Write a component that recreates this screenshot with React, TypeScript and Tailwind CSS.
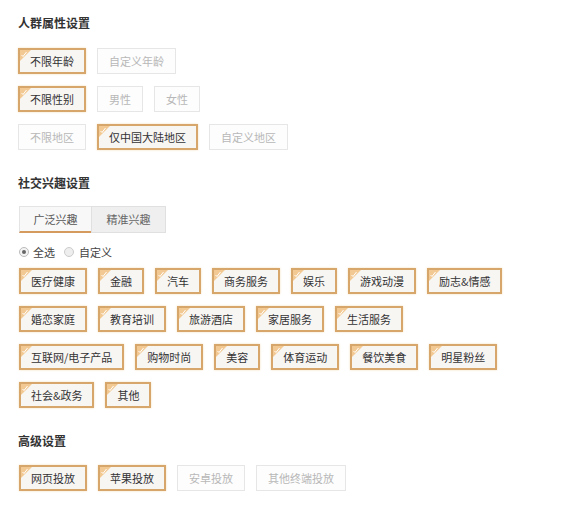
import React from 'react';

type Opt = { label: string; on?: boolean };

const font = { fontFamily: '"Noto Sans CJK SC", "Noto Sans", sans-serif' };

const crowdRows: Opt[][] = [
  [{ label: '不限年龄', on: true }, { label: '自定义年龄' }],
  [{ label: '不限性别', on: true }, { label: '男性' }, { label: '女性' }],
  [{ label: '不限地区' }, { label: '仅中国大陆地区', on: true }, { label: '自定义地区' }],
];

const interestRows: string[][] = [
  ['医疗健康', '金融', '汽车', '商务服务', '娱乐', '游戏动漫', '励志&情感'],
  ['婚恋家庭', '教育培训', '旅游酒店', '家居服务', '生活服务'],
  ['互联网/电子产品', '购物时尚', '美容', '体育运动', '餐饮美食', '明星粉丝'],
  ['社会&政务', '其他'],
];

const advanced: Opt[] = [
  { label: '网页投放', on: true },
  { label: '苹果投放', on: true },
  { label: '安卓投放' },
  { label: '其他终端投放' },
];

function Corner() {
  return (
    <svg width="11" height="11" viewBox="0 0 11 11" className="absolute left-0 top-0">
      <polygon points="0,0 11,0 0,11" fill="#f3c993" />
      <path d="M1.5 5 L3 6.5 L6.5 2" stroke="#ffffff" strokeWidth="1" fill="none" />
    </svg>
  );
}

function Chip({ label, on }: Opt) {
  if (on) {
    return (
      <div className="relative flex h-[26px] min-w-[46px] items-center justify-center border-2 border-[#d6a66a] bg-[#f8f6f3] px-[10px] text-[11px] text-[#333] shadow-[0_0_2px_#f3dcbc]">
        <Corner />
        {label}
      </div>
    );
  }
  return (
    <div className="flex h-[26px] min-w-[46px] items-center justify-center border border-[#e6e6e6] bg-[#fdfdfd] px-[11px] text-[11px] text-[#b8b8b8]">
      {label}
    </div>
  );
}

function Title({ children }: { children: React.ReactNode }) {
  return <div className="h-[20px] text-[12px] font-bold leading-[20px] text-[#333]">{children}</div>;
}

export default function App() {
  return (
    <div className="h-[510px] w-[573px] bg-white pl-[18px] pt-[13px]" style={font}>
      <Title>人群属性设置</Title>
      <div className="mt-[15px] flex flex-col gap-[12px]">
        {crowdRows.map((row, i) => (
          <div key={i} className="flex gap-[11px]">
            {row.map(o => (
              <Chip key={o.label} {...o} />
            ))}
          </div>
        ))}
      </div>

      <div className="mt-[23px]">
        <Title>社交兴趣设置</Title>
      </div>
      <div className="ml-px mt-[13px] flex h-[27px] text-[11px]">
        <div className="flex w-[72px] items-center justify-center border-b-2 border-l border-t border-[#e4e4e4] border-b-[#d49a5e] bg-[#f8f8f8] text-[#555]">
          广泛兴趣
        </div>
        <div className="flex w-[75px] items-center justify-center border border-[#e0e0e0] bg-[#efefef] text-[#666]">
          精准兴趣
        </div>
      </div>
      <div className="ml-px mt-[11px] flex h-[16px] items-center text-[11px] text-[#444]">
        <span className="flex h-[10px] w-[10px] items-center justify-center rounded-full border border-[#bbb] bg-[#f4f4f4]">
          <span className="h-[4px] w-[4px] rounded-full bg-[#666]" />
        </span>
        <span className="ml-[4px]">全选</span>
        <span className="ml-[9px] h-[10px] w-[10px] rounded-full border border-[#ccc] bg-[#eee]" />
        <span className="ml-[5px]">自定义</span>
      </div>
      <div className="ml-px mt-[8px] flex flex-col gap-[12px]">
        {interestRows.map((row, i) => (
          <div key={i} className="flex gap-[11px]">
            {row.map(t => (
              <Chip key={t} label={t} on />
            ))}
          </div>
        ))}
      </div>

      <div className="mt-[23px]">
        <Title>高级设置</Title>
      </div>
      <div className="ml-px mt-[14px] flex gap-[11px]">
        {advanced.map(o => (
          <Chip key={o.label} {...o} />
        ))}
      </div>
    </div>
  );
}
